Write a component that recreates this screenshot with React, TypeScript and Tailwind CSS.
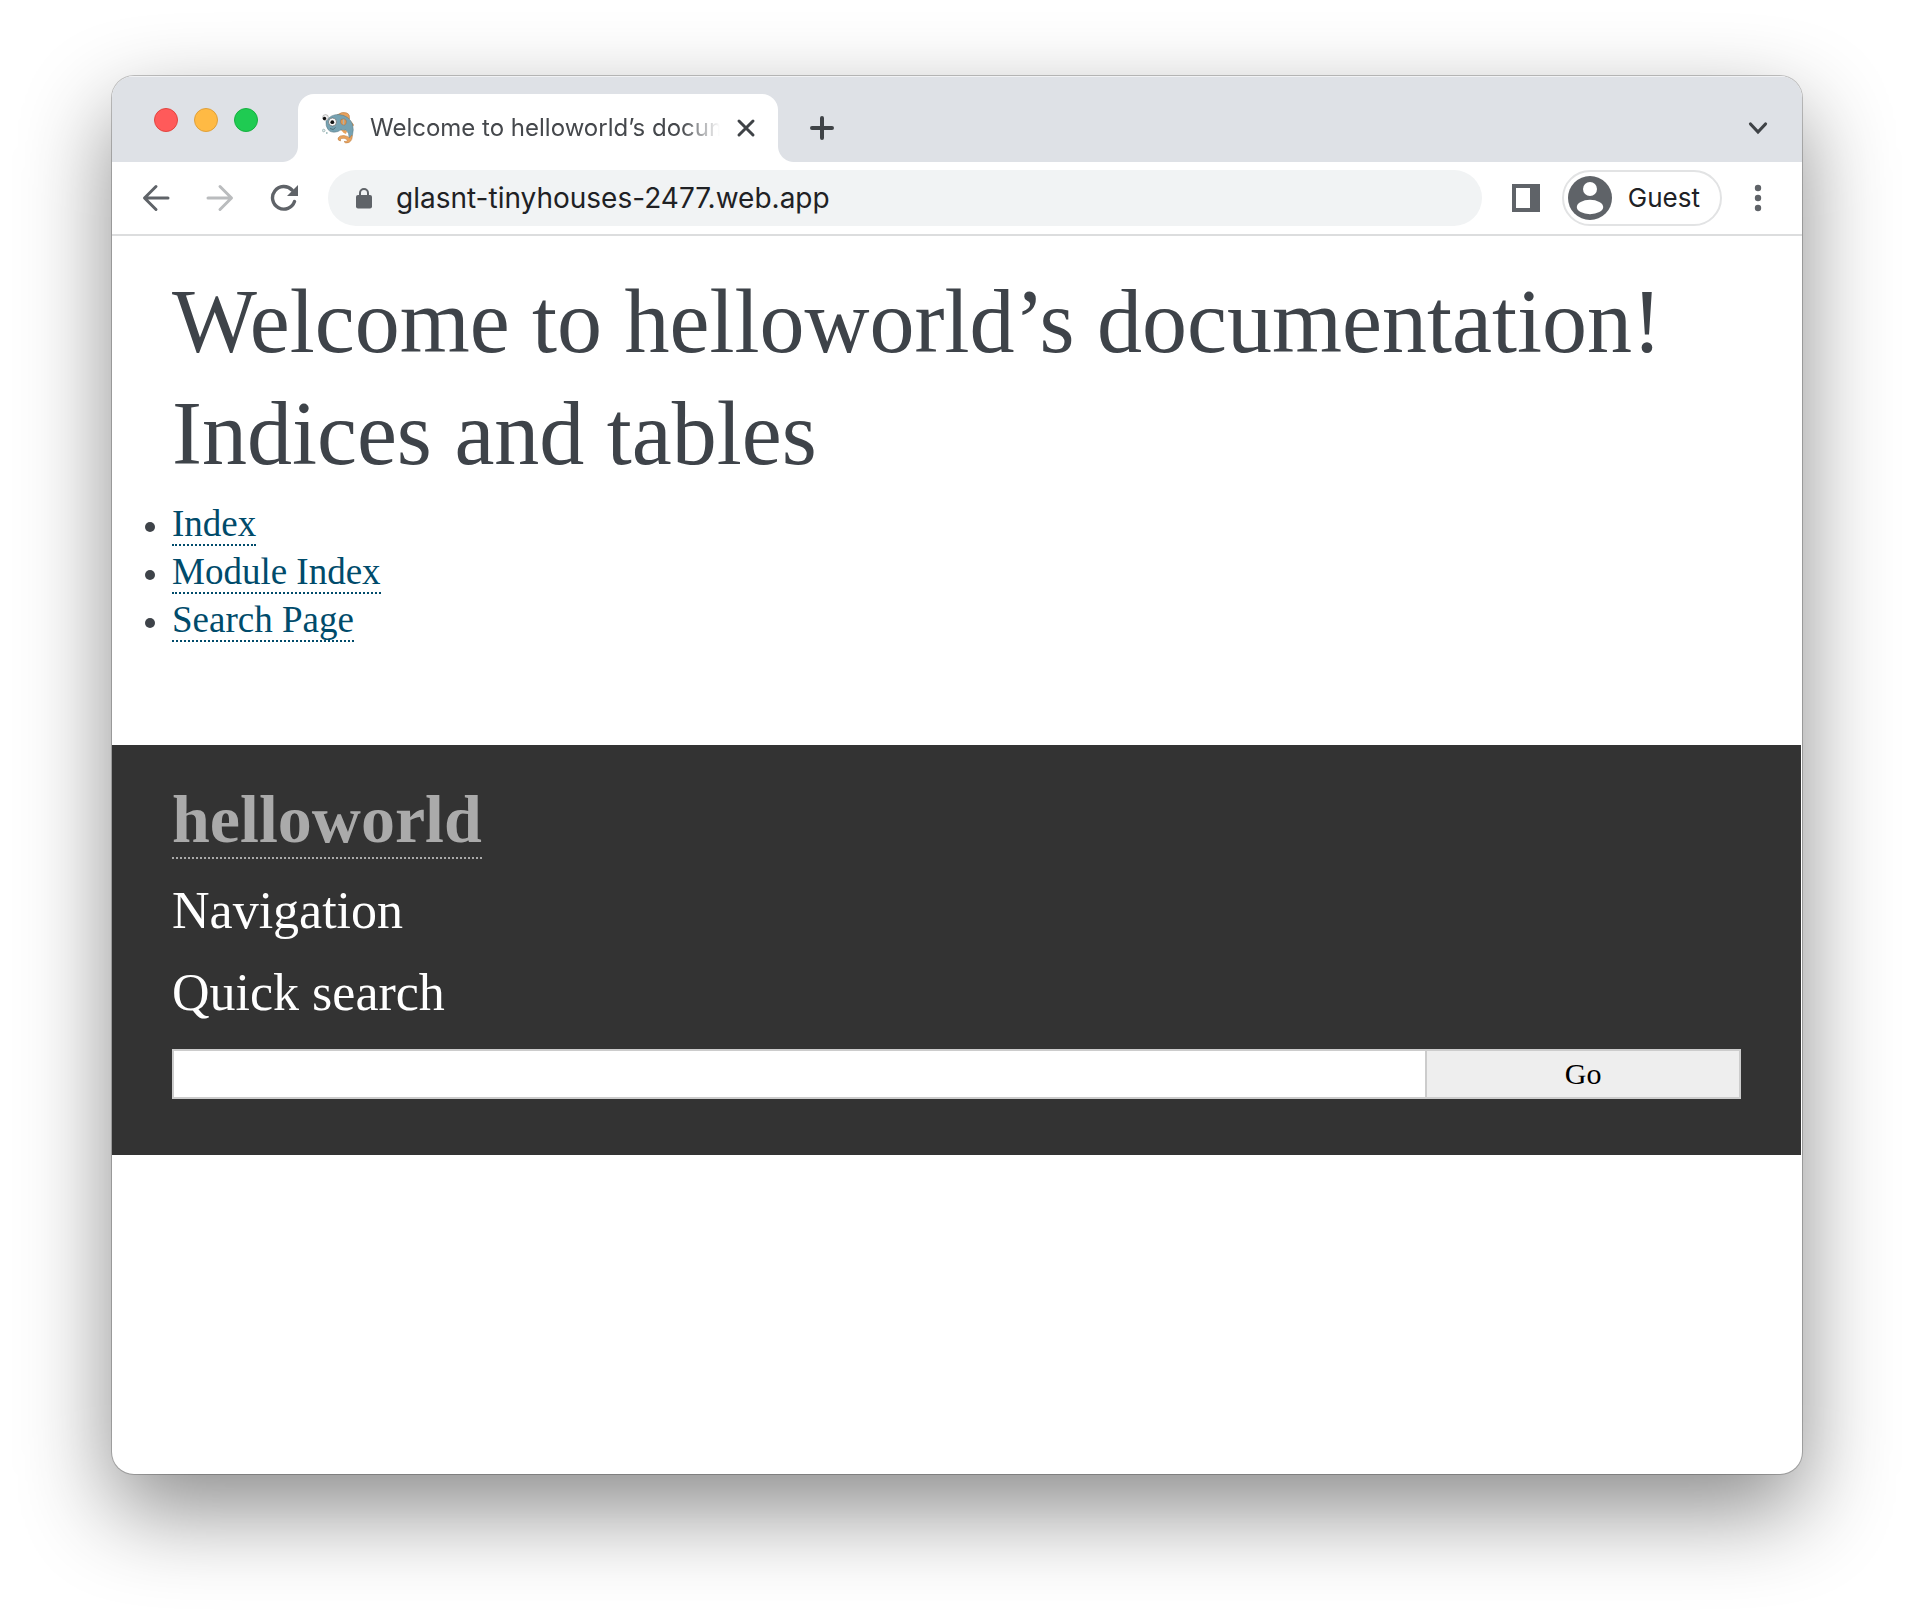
import React from "react";

const serif = "font-['Georgia','Liberation_Serif',serif]";

function Fish() {
  return (
    <svg viewBox="0 0 32 34" className="h-[34px] w-8 shrink-0" aria-hidden="true">
      <path d="M15 4 Q20 0 25 2 Q28 3 27.500 8 Q22 4 15 4Z" fill="#e9a25c" stroke="#a87442" strokeWidth=".5" />
      <path d="M29 10 L32 14 L30.500 16Z" fill="#e0924a" />
      <path d="M19 19 Q22 18 25 20 L24 23 Q21 22 19 19Z" fill="#e9a25c" />
      <path d="M4 10 Q9 3 17 3.500 Q27 4.500 30.500 13 Q32 19 30.500 24 L29 28 L27 27 Q27.500 22 24 19 Q18 18 16 20.500 Q9 22.500 6 18.500 Q3.500 15 4 10Z" fill="#76a2b2" stroke="#56757f" strokeWidth=".5" />
      <path d="M30 24 Q31 29 27 31.500 Q23 33 22 30.500 Q25 31 25.500 29 Q23 26.500 19.500 27.500 Q18 28.500 18.500 30 Q15.500 29.500 16 27 Q17.500 24 22 24.500 Q26 25 27.500 27 Z" fill="#e9a25c" stroke="#b57a42" strokeWidth=".5" />
      <path d="M19 8.500 Q23.500 7 24.300 10 Q24.500 13.500 22.500 14 Q17.500 14 19 8.500Z" fill="#e39b57" stroke="#9c6b3f" strokeWidth=".5" />
      <path d="M21.500 8.500 V13.500" stroke="#a8b4b0" strokeWidth="1.200" />
      <circle cx="3.500" cy="6.500" r="2.900" fill="#eee" stroke="#888" strokeWidth=".5" />
      <circle cx="2.500" cy="7.500" r="1.700" fill="#111" />
      <circle cx="10.500" cy="11" r="4" fill="#fafafa" stroke="#555" strokeWidth=".6" />
      <circle cx="10.300" cy="11.200" r="1.900" fill="#111" />
      <path d="M8 17.500 Q11.500 20 13.500 16.500" fill="none" stroke="#3f5963" strokeWidth=".7" />
      <circle cx="1.700" cy="19.500" r="1.300" fill="#e2f0f0" stroke="#8fa8a8" strokeWidth=".7" />
      <circle cx="4.800" cy="22" r=".9" fill="#9ab8b8" />
    </svg>
  );
}

function TitleBar() {
  return (
    <header className="flex h-[86px] items-end bg-[#dee1e6] pr-8 pl-[42px] shadow-[inset_0_1px_0_#f1f2f4]">
      <div className="flex gap-4 pb-[30px]">
        <button aria-label="Close window" className="size-6 rounded-full border border-[#e2453f] bg-[#ff5a5a]" />
        <button aria-label="Minimize window" className="size-6 rounded-full border border-[#dfa03a] bg-[#ffba44]" />
        <button aria-label="Zoom window" className="size-6 rounded-full border border-[#17b040] bg-[#1fcb52]" />
      </div>
      <div className="ml-6 flex h-[68px] items-end">
        <div className="size-4 bg-[radial-gradient(circle_at_0_0,#dee1e6_15.5px,#ffffff_16.5px)]" />
        <div className="flex h-[68px] w-[480px] items-center rounded-t-2xl bg-white pr-[22px] pl-6">
          <Fish />
          <span className="ml-4 flex-1 overflow-hidden whitespace-nowrap font-['Inter',sans-serif] text-[24px] leading-8 text-[#45484c] [mask-image:linear-gradient(to_right,black_89%,transparent)]">
            Welcome to helloworld’s documentation!
          </span>
          <button aria-label="Close tab" className="ml-4 shrink-0">
            <svg viewBox="0 0 20 20" className="size-5" fill="none" stroke="#3f4347" strokeWidth="3" strokeLinecap="round">
              <path d="M3 3 17 17M17 3 3 17" />
            </svg>
          </button>
        </div>
        <div className="size-4 bg-[radial-gradient(circle_at_100%_0,#dee1e6_15.5px,#ffffff_16.5px)]" />
      </div>
      <button aria-label="New tab" className="mb-[22px] ml-4">
        <svg viewBox="0 0 24 24" className="size-6" fill="none" stroke="#3f4347" strokeWidth="4" strokeLinecap="round">
          <path d="M12 2v20M2 12h20" />
        </svg>
      </button>
      <button aria-label="Search tabs" className="mb-[22px] ml-auto">
        <svg viewBox="0 0 24 24" className="size-6" fill="none" stroke="#3f4347" strokeWidth="3.2" strokeLinecap="round">
          <path d="m4.500 8 7.500 8 7.500-8" />
        </svg>
      </button>
    </header>
  );
}

function Toolbar() {
  return (
    <nav className="flex h-[74px] items-center border-b-2 border-[#dcddde] bg-white pr-8 pl-[30px] font-['Inter',sans-serif]">
      <div className="flex shrink-0 gap-9">
        <button aria-label="Back">
          <svg viewBox="0 0 28 28" className="size-7" fill="none" stroke="#5f6368" strokeWidth="3" strokeLinecap="round" strokeLinejoin="round">
            <path d="M26 14H3M14 2.500 2.500 14 14 25.500" />
          </svg>
        </button>
        <button aria-label="Forward">
          <svg viewBox="0 0 28 28" className="size-7" fill="none" stroke="#babcbe" strokeWidth="3" strokeLinecap="round" strokeLinejoin="round">
            <path d="M2 14H25M14 2.500 25.500 14 14 25.500" />
          </svg>
        </button>
        <button aria-label="Reload">
          <svg viewBox="0 0 28 28" className="size-7" fill="none" stroke="#5f6368" strokeWidth="3.400" strokeLinecap="round">
            <path d="M24.500 17.500A11.300 11.300 0 1 1 22 6" />
            <path d="M28 1V12H17Z" fill="#5f6368" stroke="none" />
          </svg>
        </button>
      </div>
      <div className="ml-[30px] flex h-14 flex-1 items-center rounded-full bg-[#f1f3f4] pl-7">
        <svg viewBox="0 0 16 22" className="h-[22px] w-4 shrink-0" aria-hidden="true">
          <path d="M4 10V6a4 4 0 0 1 8 0v4" fill="none" stroke="#5f6368" strokeWidth="2" />
          <rect y="8" width="16" height="13.500" rx="2" fill="#5f6368" />
        </svg>
        <input
          aria-label="Address"
          defaultValue="glasnt-tinyhouses-2477.web.app"
          className="ml-6 min-w-0 flex-1 bg-transparent text-[28px] leading-10 text-[#202124] outline-none"
        />
      </div>
      <button aria-label="Side panel" className="ml-[30px]">
        <svg viewBox="0 0 28 28" className="size-7">
          <path d="M0 0H28V28H0ZM4 4V24H18V4Z" fill="#5f6368" fillRule="evenodd" />
        </svg>
      </button>
      <button className="ml-[22px] flex h-14 items-center rounded-full border-2 border-[#e2e3e4] pr-5 pl-1 text-[26px] leading-8 text-[#202124]">
        <svg viewBox="0 0 44 44" className="mr-4 size-11" aria-hidden="true">
          <circle cx="22" cy="22" r="22" fill="#5f6368" />
          <circle cx="22" cy="13" r="7" fill="#fff" />
          <ellipse cx="22" cy="31" rx="13.200" ry="7.200" fill="#fff" />
        </svg>
        Guest
      </button>
      <button aria-label="Menu" className="ml-6">
        <svg viewBox="0 0 24 28" className="h-7 w-6" fill="#5f6368">
          <circle cx="12" cy="4" r="3.200" />
          <circle cx="12" cy="14" r="3.200" />
          <circle cx="12" cy="24" r="3.200" />
        </svg>
      </button>
    </nav>
  );
}

export default function App() {
  return (
    <div className="min-h-screen bg-white px-28 pt-[76px] pb-[148px]">
      <div className="flex min-h-[1398px] flex-col overflow-hidden rounded-[22px] bg-white shadow-[0_0_0_1px_rgba(0,0,0,0.22),0_36px_90px_rgba(0,0,0,0.46)]">
        <TitleBar />
        <Toolbar />
        <div className={serif}>
          <main className="px-[60px] pt-[30px] pb-[101px] text-[#3e4349]">
            <h1 className="whitespace-nowrap text-[90px] leading-[112px]">Welcome to helloworld’s documentation!</h1>
            <h2 className="text-[90px] leading-[112px]">Indices and tables</h2>
            <ul className="mt-[10px] text-[37px] leading-[48px] text-[#004b6b]">
              {["Index", "Module Index", "Search Page"].map((name) => (
                <li key={name} className="relative">
                  <span className="absolute top-[22px] -left-[27px] size-[10px] rounded-full bg-[#3e4349]" />
                  <a href="#" className="border-b-2 border-dotted border-[#004b6b]">{name}</a>
                </li>
              ))}
            </ul>
          </main>
          <aside className="mr-px bg-[#333333] px-[60px] pt-[34px] pb-14 text-white">
            <h1 className="text-[68px] leading-[80px] font-bold text-[#aaaaaa]">
              <a href="#" className="border-b-2 border-dotted border-[#aaaaaa]">helloworld</a>
            </h1>
            <h3 className="mt-[22px] text-[52px] leading-[60px]">Navigation</h3>
            <h3 className="mt-[22px] text-[52px] leading-[60px]">
              <label htmlFor="search">Quick search</label>
            </h3>
            <form className="mt-[26px] flex h-[50px]" onSubmit={(e) => e.preventDefault()}>
              <input id="search" type="text" className="w-4/5 border-2 border-[#cccccc] bg-white px-2 text-[30px] text-black outline-none" />
              <button type="submit" className="-ml-0.5 flex-1 border-2 border-[#cccccc] bg-[#eeeeee] text-[30px] leading-8 text-black">Go</button>
            </form>
          </aside>
        </div>
      </div>
    </div>
  );
}
